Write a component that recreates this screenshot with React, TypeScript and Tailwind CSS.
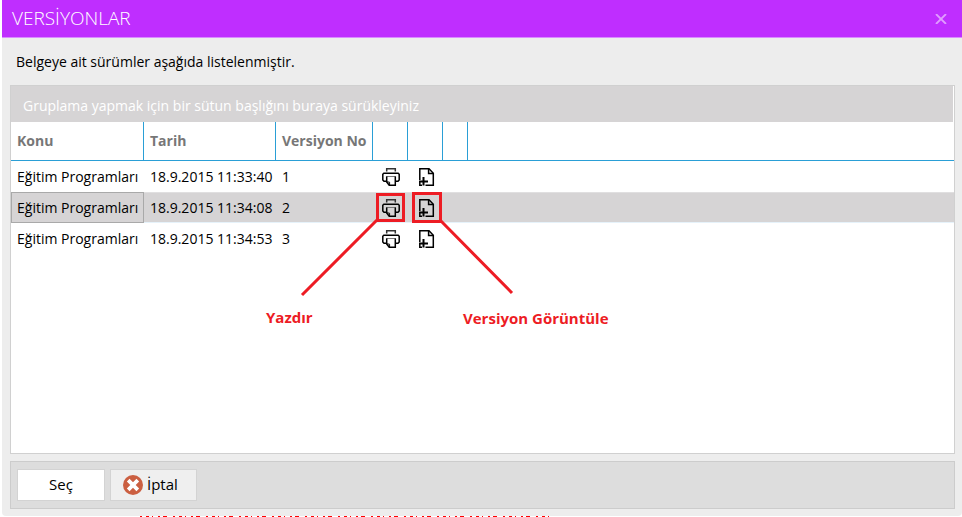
import { useState } from "react";

type Version = {
  subject: string;
  date: string;
  no: number;
};

const versions: Version[] = [
  { subject: "Eğitim Programları", date: "18.9.2015 11:33:40", no: 1 },
  { subject: "Eğitim Programları", date: "18.9.2015 11:34:08", no: 2 },
  { subject: "Eğitim Programları", date: "18.9.2015 11:34:53", no: 3 },
];

const PrinterIcon = () => (
  <svg
    width="18"
    height="18"
    viewBox="0 0 18 18"
    fill="none"
    stroke="black"
    strokeWidth="1.5"
    aria-hidden="true"
  >
    <path d="M4.7 3.6V0.8H13.3V3.6" stroke="#333333" />
    <path d="M4 13.2H2L0.8 12V6.2L1.8 5.2H16.2L17.2 6.2V12L16 13.2H14" />
    <path d="M4.2 8.5H13.8" stroke="#777777" strokeWidth="1" />
    <path d="M4.7 8.5V14L7.2 17.2H13.3V8.5" />
    <path d="M4.7 13.8L7.6 14.2V17" strokeWidth="1" />
  </svg>
);

const AddPageIcon = () => (
  <svg
    width="16"
    height="18"
    viewBox="0 0 16 18"
    fill="none"
    stroke="black"
    strokeWidth="1.5"
    aria-hidden="true"
  >
    <path d="M0.8 12V0.8H10L14.3 5.2V17.2H6.5" />
    <path d="M9.6 1V5.6H14" />
    <path d="M4.5 9V17.5M0 13.5H9" strokeWidth="2" />
    <path d="M0.8 13V17.2H3" />
  </svg>
);

const CancelIcon = () => (
  <svg width="20" height="20" viewBox="0 0 20 20" aria-hidden="true">
    <circle cx="10" cy="10" r="10" fill="#cb5f41" />
    <path d="M5.2 5.2L14.8 14.8M14.8 5.2L5.2 14.8" stroke="white" strokeWidth="3.8" />
  </svg>
);

const headCell =
  "border-r border-[#2a9fd6] px-[6px] text-left font-bold text-[#777777]";

const App: React.FC = () => {
  const [selected, setSelected] = useState(2);

  return (
    <div className="h-screen overflow-hidden bg-white pl-[2px] font-['Open_Sans','Noto_Sans',sans-serif] text-sm text-black">
      <div
        role="dialog"
        aria-labelledby="title"
        className="flex flex-col rounded-b-sm bg-[#ededed]"
      >
        <header className="flex h-[38px] items-center justify-between border-b border-[#d98cff] bg-[#bf2eff] pr-[14px] pl-[10px] text-white">
          <h1 id="title" className="text-[19px] font-light">
            VERSİYONLAR
          </h1>
          <button type="button" aria-label="Kapat" className="px-px py-[2px]">
            <svg width="12" height="10" viewBox="0 0 12 10" aria-hidden="true">
              <path d="M1 0L11 10M11 0L1 10" stroke="#e09cff" strokeWidth="1.8" />
            </svg>
          </button>
        </header>

        <p className="px-[14px] pt-[14px] pb-[13px] leading-5">
          Belgeye ait sürümler aşağıda listelenmiştir.
        </p>

        <div className="relative mr-[7px] ml-2 h-[369px] border border-[#d0d0d0] bg-white">
          <p className="mr-px h-9 bg-[#d6d4d5] px-3 leading-10 text-white">
            Gruplama yapmak için bir sütun başlığını buraya sürükleyiniz
          </p>
          <table className="w-full table-fixed border-separate border-spacing-0">
            <colgroup>
              <col className="w-[133px]" />
              <col className="w-[132px]" />
              <col className="w-[97px]" />
              <col className="w-[35px]" />
              <col className="w-[35px]" />
              <col className="w-[25px]" />
              <col />
            </colgroup>
            <thead>
              <tr className="h-[39px] whitespace-nowrap *:border-b *:border-b-[#2a9fd6]">
                <th className={headCell}>Konu</th>
                <th className={headCell}>Tarih</th>
                <th className={headCell}>Versiyon No</th>
                <td className={headCell}></td>
                <td className={headCell}></td>
                <td className={headCell}></td>
                <td></td>
              </tr>
            </thead>
            <tbody>
              {versions.map((v) => (
                <tr
                  key={v.no}
                  onClick={() => setSelected(v.no)}
                  className={
                    v.no === selected
                      ? "h-[31px] bg-[#d6d4d5] whitespace-nowrap *:border-y *:border-t-[#e0dfe0] *:border-b-[#e6f2fa]"
                      : "h-[31px] whitespace-nowrap *:border-y *:border-transparent"
                  }
                >
                  <td
                    className={
                      v.no === selected
                        ? "px-[6px] outline-1 -outline-offset-1 outline-[#a9a9a9]"
                        : "px-[6px]"
                    }
                  >
                    {v.subject}
                  </td>
                  <td className="px-[6px]">{v.date}</td>
                  <td className="px-[6px]">{v.no}</td>
                  <td>
                    <button type="button" aria-label="Yazdır" className="ml-[9px] block">
                      <PrinterIcon />
                    </button>
                  </td>
                  <td>
                    <button type="button" aria-label="Versiyon Görüntüle" className="ml-[11px] block">
                      <AddPageIcon />
                    </button>
                  </td>
                  <td></td>
                  <td></td>
                </tr>
              ))}
            </tbody>
          </table>

          {/* callouts over the two action columns */}
          <svg
            className="pointer-events-none absolute top-0 left-0"
            width="620"
            height="250"
            viewBox="11 86 620 250"
            fill="none"
            stroke="#ed1c24"
            strokeWidth="3"
            aria-hidden="true"
          >
            <rect x="377.5" y="194.5" width="26" height="26" />
            <rect x="413.5" y="193.5" width="27" height="28" />
            <path d="M377 220L302 295M440 220L512 293" />
          </svg>
          <span className="absolute top-[221px] left-[255px] text-[15px] leading-5 font-bold text-[#ed1c24]">
            Yazdır
          </span>
          <span className="absolute top-[222px] left-[452px] text-[15px] leading-5 font-bold whitespace-nowrap text-[#ed1c24]">
            Versiyon Görüntüle
          </span>
        </div>

        <footer className="mt-[7px] mr-[7px] mb-[7px] ml-2 flex h-12 items-center gap-[5px] border border-[#cccccc] bg-[#dddddd] px-[6px] text-[15px]">
          <button type="button" className="h-8 w-[88px] border border-[#d3d3d3] bg-white">
            Seç
          </button>
          <button
            type="button"
            className="flex h-8 w-[87px] items-center gap-1 border border-[#d3d3d3] bg-[#efefef] pl-3"
          >
            <CancelIcon />
            İptal
          </button>
        </footer>
      </div>
      <svg className="ml-[138px] block" width="412" height="1" aria-hidden="true">
        <path d="M0 0.5H412" stroke="red" strokeDasharray="2 4 3 3 1 5 2 3 4 6" />
      </svg>
    </div>
  );
};

export default App;
